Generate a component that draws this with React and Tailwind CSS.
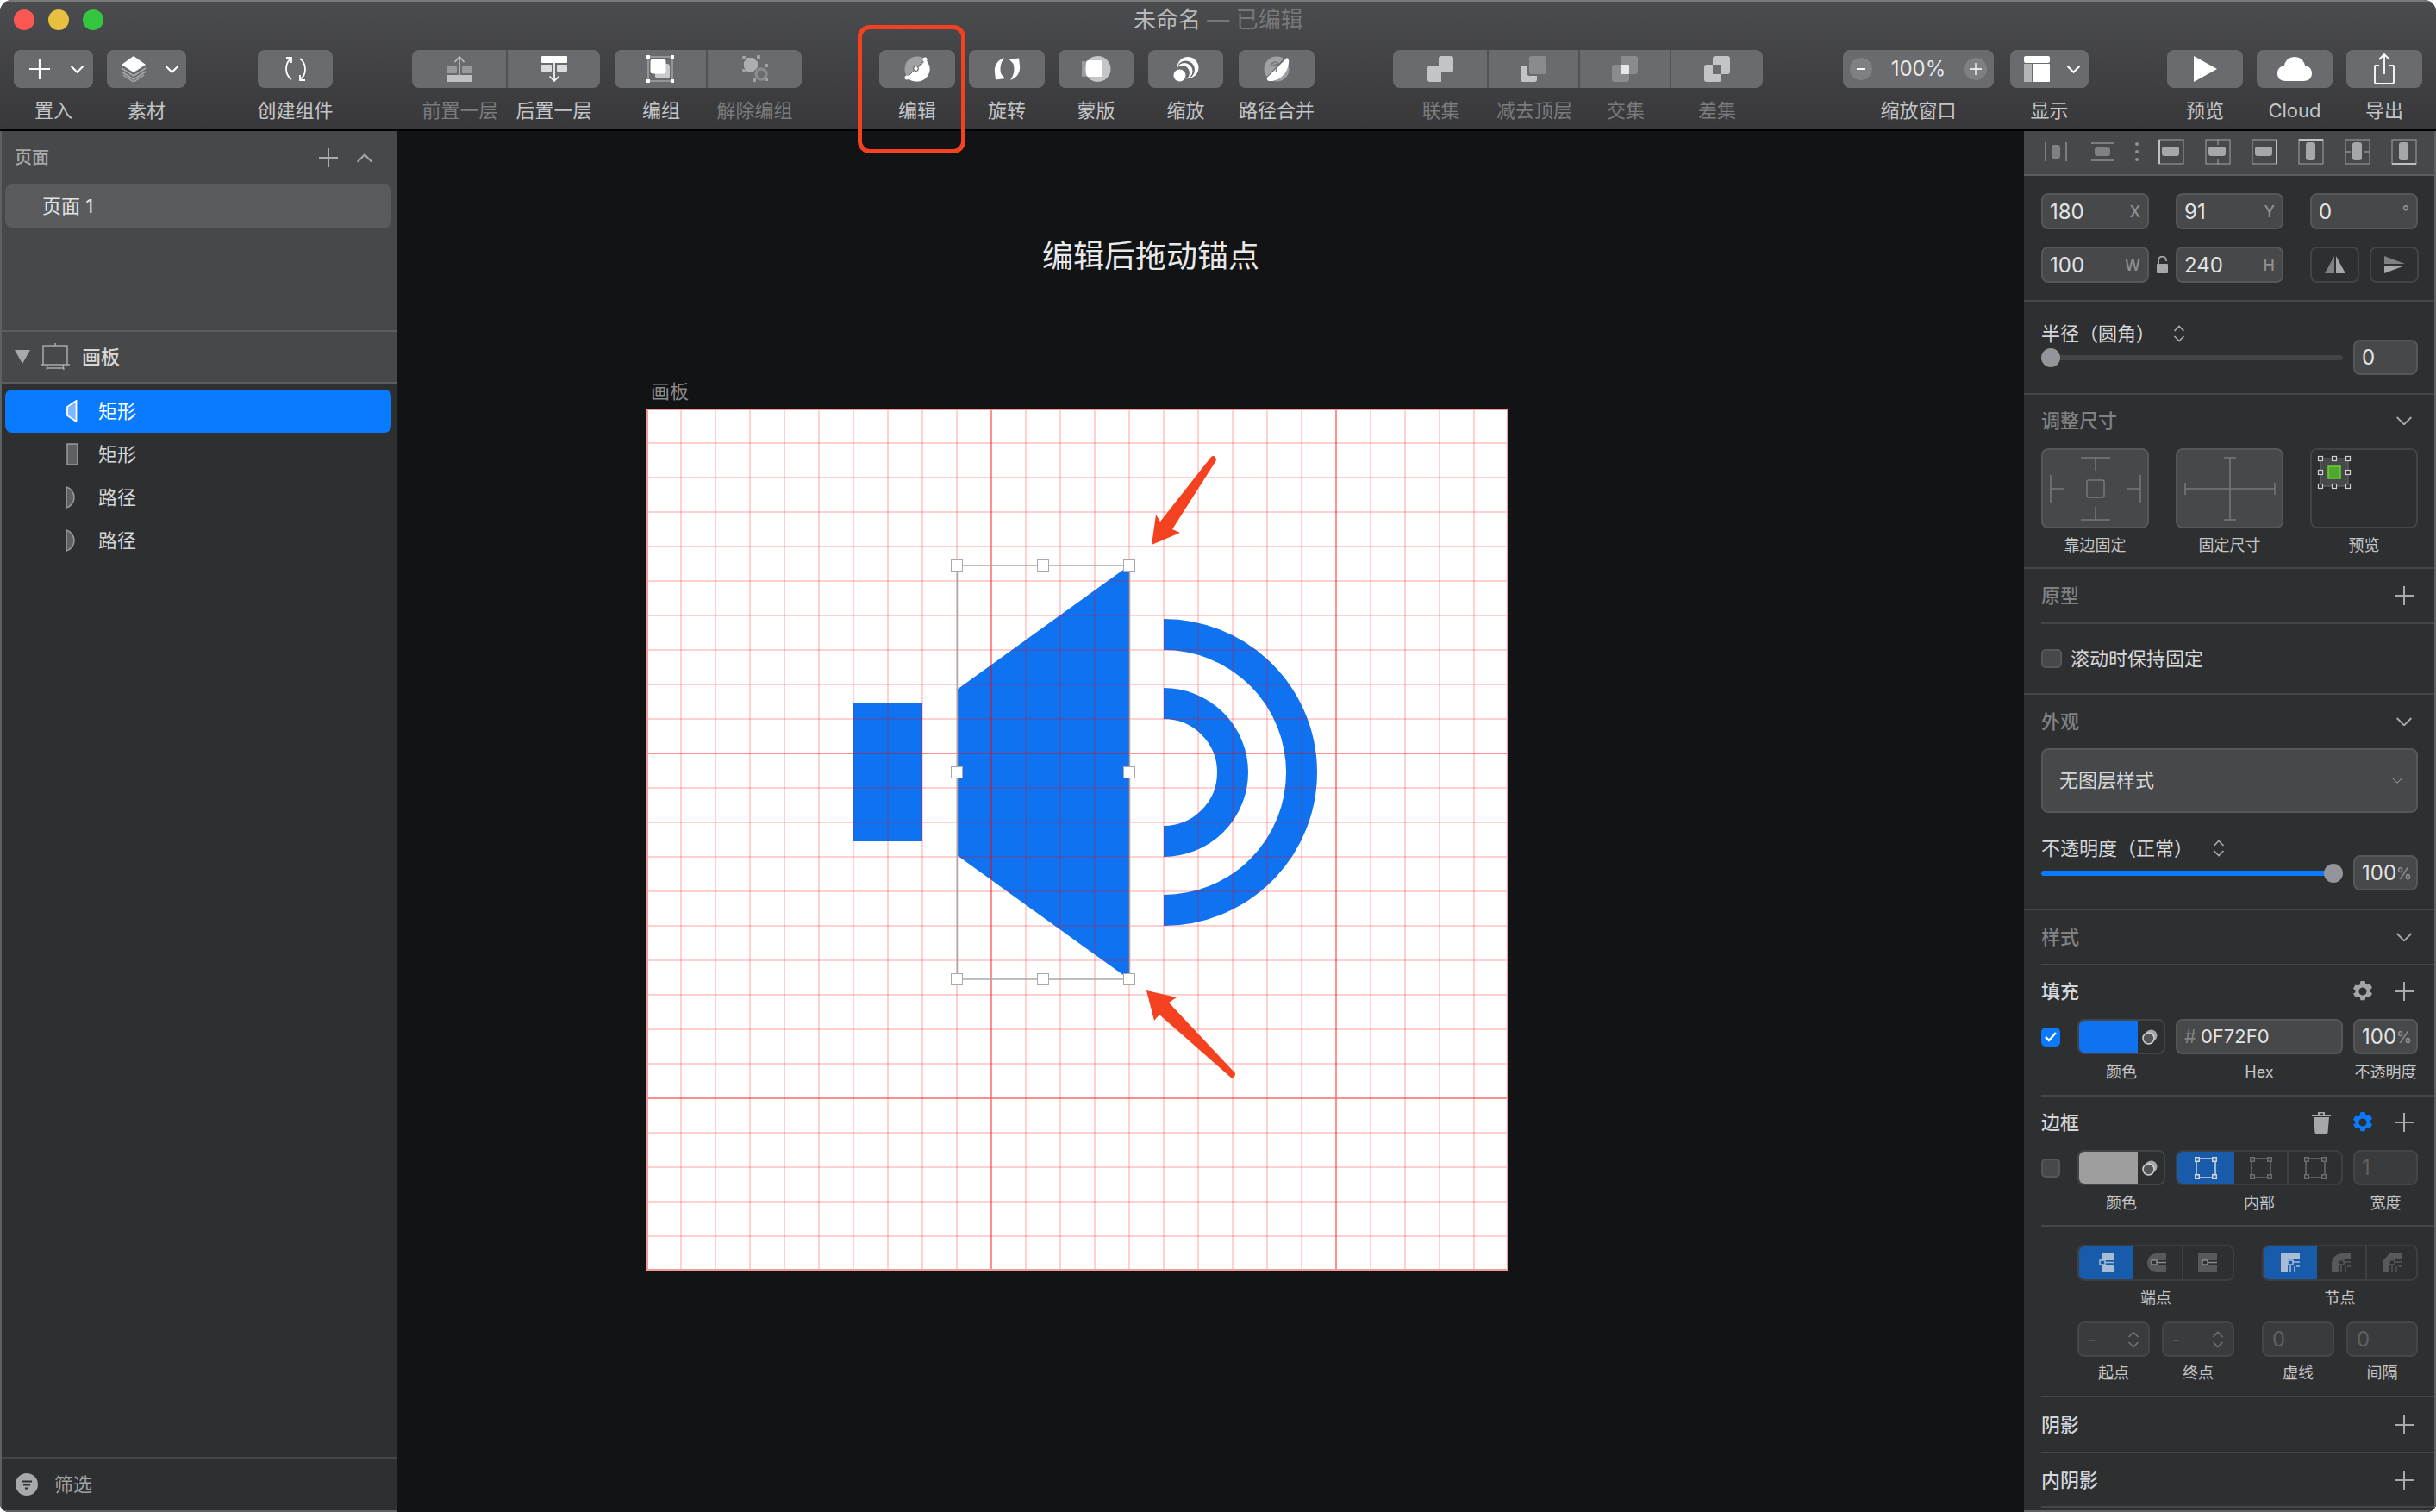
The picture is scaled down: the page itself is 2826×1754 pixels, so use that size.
import React from "react";

const Plus = ({ size = 22, color = "#a9aaac", strokeWidth = 2 }) => (
  <svg width={size} height={size} viewBox="0 0 22 22" fill="none" stroke={color} strokeWidth={strokeWidth}>
    <path d="M11 0V22M0 11H22" />
  </svg>
);

const Chevron = ({ size = 18, color = "#a9aaac", up = false, strokeWidth = 2 }) => (
  <svg width={size} height={size * 0.6} viewBox="0 0 18 11" fill="none" stroke={color} strokeWidth={strokeWidth}>
    <path d={up ? "M0.5 10L9 1.5L17.5 10" : "M0.5 1L9 9.5L17.5 1"} />
  </svg>
);

const Updown = ({ color = "#a9aaac" }) => (
  <svg width="14" height="20" viewBox="0 0 14 20" fill="none" stroke={color} strokeWidth="1.6">
    <path d="M1.5 7L7 1.5L12.5 7M1.5 13L7 18.5L12.5 13" />
  </svg>
);

const Gear = ({ color = "#a4a5a7" }) => (
  <svg width="26" height="26" viewBox="0 0 26 26">
    <path
      fill={color}
      fillRule="evenodd"
      d="M10.5 1h5l.8 3.2 2 1.1 3.2-.9 2.500 4.300-2.400 2.300v2.200l2.400 2.300-2.500 4.300-3.200-.9-2 1.100-.8 3.200h-5l-.8-3.200-2-1.100-3.200.9-2.500-4.300L4.400 14.200V12L2 9.700l2.500-4.300 3.200.9 2-1.100zM13 8.500a4.500 4.500 0 1 0 0 9 4.500 4.500 0 0 0 0-9z"
    />
  </svg>
);

const Icon = ({ children, w = 30, h = 30 }) => (
  <svg width={w} height={h} viewBox={`0 0 ${w} ${h}`} fill="none">
    {children}
  </svg>
);

const BTN = "#6a6b6e";

const icons = {
  layers: (
    <Icon>
      <path d="M15 0L29 10L15 19L1 10Z" fill="#fff" />
      <path d="M1 14L15 23L29 14M1 18L15 27L29 18M3 22L15 30L27 22" stroke="#a8a9ab" strokeWidth="1.5" />
    </Icon>
  ),
  symbol: (
    <Icon>
      <path d="M10 3C2 8 2 21 10 27M20 27C28 22 28 9 20 3" stroke="#fff" strokeWidth="1.8" />
      <path d="M4 2H10V8M26 28H20V22" stroke="#fff" strokeWidth="1.8" />
    </Icon>
  ),
  forward: (
    <Icon>
      <rect x="0" y="12" width="12" height="8" rx="1" fill="#98999b" />
      <rect x="18" y="12" width="12" height="8" rx="1" fill="#98999b" />
      <rect x="0" y="22" width="30" height="8" rx="1" fill="#bfc0c2" />
      <path d="M15 22V1M9.500 7L15 1L20.500 7" stroke="#bfc0c2" strokeWidth="1.6" />
    </Icon>
  ),
  backward: (
    <Icon>
      <rect x="0" y="0" width="30" height="8" rx="1" fill="#fff" />
      <rect x="0" y="10" width="12" height="8" rx="1" fill="#dcdde0" />
      <rect x="18" y="10" width="12" height="8" rx="1" fill="#dcdde0" />
      <path d="M15 8V29M9.500 23.500L15 29L20.500 23.500" stroke="#fff" strokeWidth="1.6" />
    </Icon>
  ),
  group: (
    <Icon w={32} h={32}>
      <rect x="2" y="2" width="28" height="28" stroke="#a0a1a3" strokeWidth="1.6" />
      <path d="M0 0h4v4H0zM28 0h4v4h-4zM0 28h4v4H0zM28 28h4v4h-4z" fill="#fff" />
      <rect x="10" y="10" width="17" height="17" rx="3" fill="#c9cacc" />
      <rect x="4.500" y="4.500" width="18" height="17" rx="3" fill="#fff" />
    </Icon>
  ),
  ungroup: (
    <Icon w={30} h={32}>
      <path d="M6 3H13L18 8V14L13 19H6L2 14V8Z" fill="#adaeb0" />
      <path d="M0 1h4v4H0zM17 0h4v4h-4zM0 16h4v4H0zM27 10h3v4h-3zM16 16h4v4h-4zM27 26h3v4h-3zM12 27h4v4h-4z" fill="#a0a1a3" />
      <circle cx="22" cy="22" r="6" stroke="#8a8b8d" strokeWidth="3.500" />
    </Icon>
  ),
  edit: (
    <Icon>
      <circle cx="15" cy="15" r="14.500" fill="#a0a1a3" />
      <path d="M24.500 4C22 9 19 12 15 14C10 16 8 21 3 25C6 28 10 29.500 15 29.500A14.500 14.500 0 0 0 24.500 4Z" fill="#fff" />
      <path d="M3 25L13.500 14.500L24 4" stroke={BTN} strokeWidth="1" />
      <circle cx="24" cy="4" r="2.500" fill="#fff" />
      <circle cx="13.500" cy="14.500" r="2.800" fill="#fff" stroke={BTN} strokeWidth="1.200" />
      <circle cx="3" cy="25" r="2.500" fill="#fff" />
    </Icon>
  ),
  rotate: (
    <Icon w={31}>
      <path d="M12 2C4 5 0 11 1 19L2 27.500L13 26L8.500 21C6.500 15 7.500 8 12 2Z" fill="#fff" />
      <path d="M12 2C4 5 0 11 1 19L2 27.500L13 26L8.500 21C6.500 15 7.500 8 12 2Z" fill="#fff" transform="rotate(180 15.500 15)" />
    </Icon>
  ),
  mask: (
    <Icon w={34}>
      <rect x="0" y="6" width="5" height="18" rx="1" fill="#9b9c9e" />
      <circle cx="18.500" cy="15" r="15" fill="#c4c5c7" />
      <rect x="5" y="5" width="19" height="19" rx="3" fill="#fff" />
    </Icon>
  ),
  scale: (
    <Icon>
      <circle cx="17" cy="13.500" r="12.500" fill="#fff" />
      <circle cx="14.500" cy="16" r="10.500" fill={BTN} />
      <circle cx="13" cy="17.500" r="9.500" fill="#fff" />
      <circle cx="10.500" cy="19.500" r="8.500" fill={BTN} />
      <circle cx="7.500" cy="22.500" r="7" fill="#fff" />
    </Icon>
  ),
  combine: (
    <Icon>
      <circle cx="15" cy="15" r="14.500" fill="#a0a1a3" />
      <path d="M26 0L30 4L29 9C27 20 18 30 6 30L1 27Z" fill={BTN} />
      <path d="M27 2Q30 4 29 8C28 20 18 30 6 29Q3 28 4 25Z" fill="#fff" />
      <path d="M7 12L17 9L14 18M17 9C14 5 10 7 7 12" stroke="#6d6e70" strokeWidth="1.200" />
    </Icon>
  ),
  union: (
    <Icon>
      <path d="M16 0H27Q30 0 30 3V16Q30 19 27 19H16V30H3Q0 30 0 27V14Q0 11 3 11H13V3Q13 0 16 0Z" fill="#c3c4c6" />
    </Icon>
  ),
  subtract: (
    <Icon>
      <rect x="10" y="0" width="20" height="21" rx="3" fill="#8a8b8d" />
      <path d="M0 14Q0 11 3 11H8V21Q8 23 10 23H19V27Q19 30 16 30H3Q0 30 0 27Z" fill="#c3c4c6" />
    </Icon>
  ),
  intersect: (
    <Icon>
      <rect x="10" y="0" width="20" height="21" rx="3" fill="#8a8b8d" />
      <rect x="0" y="10" width="20" height="20" rx="3" fill="#8a8b8d" />
      <rect x="10" y="10" width="10" height="11" rx="1" fill="#e6e7e9" />
    </Icon>
  ),
  difference: (
    <Icon>
      <rect x="10" y="0" width="20" height="21" rx="3" fill="#c3c4c6" />
      <rect x="0" y="10" width="20" height="20" rx="3" fill="#c3c4c6" />
      <rect x="10" y="10" width="10" height="11" fill="#6b6c6e" />
    </Icon>
  ),
  view: (
    <Icon>
      <rect x="0" y="0" width="30" height="8" rx="2" fill="#fff" />
      <rect x="0" y="9" width="9" height="21" fill="#b4b5b7" />
      <rect x="10" y="9" width="20" height="21" rx="1" fill="#fff" />
    </Icon>
  ),
  play: (
    <Icon>
      <path d="M2 0L29 15L2 30Z" fill="#fff" />
    </Icon>
  ),
  cloud: (
    <Icon w={40}>
      <path d="M10 29C3 29 0 25 0 20C0 15 3 12 8 11C9 5 14 1 20 1C26 1 31 5 32 11C37 12 40 15 40 20C40 25 37 29 30 29Z" fill="#fff" />
    </Icon>
  ),
  share: (
    <Icon h={36}>
      <path d="M9 14H5Q4 14 4 15V33Q4 35 6 35H24Q26 35 26 33V15Q26 14 25 14H21" stroke="#fff" strokeWidth="1.800" />
      <path d="M15 24V2M9 7L15 1L21 7" stroke="#fff" strokeWidth="1.800" />
    </Icon>
  ),
};

const Tool = ({ label, className = "", btn = "rounded-[8px]", dim = false, children }) => (
  <div className={`flex flex-col items-center shrink-0 ${className}`}>
    <div className={`w-full h-[44px] bg-[#6a6b6e] flex items-center justify-center ${btn}`}>{children}</div>
    <span className={`mt-[11px] text-[22px] leading-[30px] whitespace-nowrap ${dim ? "text-[#7a7b7d]" : "text-[#c4c5c7]"}`}>
      {label}
    </span>
  </div>
);

const Menu = ({ children, gap = "gap-[22px]" }) => (
  <div className={`flex items-center pl-[6px] ${gap}`}>
    {children}
    <Chevron color="#fff" size={15} strokeWidth={2.5} />
  </div>
);

const Toolbar = () => (
  <div className="relative h-[152px] shrink-0 bg-gradient-to-b from-[#4b4c4f] to-[#38383b] border-t-2 border-[#7a7a7c] border-b-2 border-b-black">
    <div className="flex items-center h-[42px] pl-[16px] gap-[16px]">
      <div className="w-[24px] h-[24px] rounded-full bg-[#fc5753]" />
      <div className="w-[24px] h-[24px] rounded-full bg-[#e8bf3f]" />
      <div className="w-[24px] h-[24px] rounded-full bg-[#34c63f]" />
      <div className="ml-[1179px] text-[26px] leading-[34px] text-[#b9babc] whitespace-nowrap">
        未命名 <span className="text-[#77787a]">— 已编辑</span>
      </div>
    </div>
    <div className="flex mt-[14px]">
      <Tool label="置入" className="w-[92px] ml-[16px]">
        <Menu gap="gap-[24px]"><Plus size={24} color="#fff" /></Menu>
      </Tool>
      <Tool label="素材" className="w-[92px] ml-[16px]">
        <Menu>{icons.layers}</Menu>
      </Tool>
      <Tool label="创建组件" className="w-[87px] ml-[83px]">{icons.symbol}</Tool>
      <div className="flex ml-[92px]">
        <Tool label="前置一层" dim className="w-[111px]" btn="rounded-l-[8px] border-r-2 border-[#515254]">{icons.forward}</Tool>
        <Tool label="后置一层" className="w-[107px]" btn="rounded-r-[8px]">{icons.backward}</Tool>
      </div>
      <div className="flex ml-[17px]">
        <Tool label="编组" className="w-[108px]" btn="rounded-l-[8px] border-r-2 border-[#515254]">{icons.group}</Tool>
        <Tool label="解除编组" dim className="w-[109px]" btn="rounded-r-[8px]">{icons.ungroup}</Tool>
      </div>
      <Tool label="编辑" className="w-[88px] ml-[90px]">{icons.edit}</Tool>
      <Tool label="旋转" className="w-[88px] ml-[16px]">{icons.rotate}</Tool>
      <Tool label="蒙版" className="w-[87px] ml-[16px]">{icons.mask}</Tool>
      <Tool label="缩放" className="w-[87px] ml-[17px]">{icons.scale}</Tool>
      <Tool label="路径合并" className="w-[88px] ml-[18px]">{icons.combine}</Tool>
      <div className="flex ml-[91px]">
        <Tool label="联集" dim className="w-[111px]" btn="rounded-l-[8px] border-r-2 border-[#515254]">{icons.union}</Tool>
        <Tool label="减去顶层" dim className="w-[106px]" btn="border-r-2 border-[#515254]">{icons.subtract}</Tool>
        <Tool label="交集" dim className="w-[106px]" btn="border-r-2 border-[#515254]">{icons.intersect}</Tool>
        <Tool label="差集" dim className="w-[106px]" btn="rounded-r-[8px]">{icons.difference}</Tool>
      </div>
      <Tool label="缩放窗口" className="w-[175px] ml-[93px]">
        <div className="flex items-center justify-between w-full px-[8px]">
          <div className="w-[26px] h-[26px] rounded-full bg-[#7f8082] flex items-center justify-center">
            <div className="w-[10px] h-[2px] bg-white" />
          </div>
          <span className="text-[24px] text-[#e8e8e9]">100%</span>
          <div className="w-[26px] h-[26px] rounded-full bg-[#7f8082] flex items-center justify-center">
            <Plus size={14} color="#fff" />
          </div>
        </div>
      </Tool>
      <Tool label="显示" className="w-[91px] ml-[19px]">
        <Menu gap="gap-[20px]">{icons.view}</Menu>
      </Tool>
      <Tool label="预览" className="w-[88px] ml-[91px]">{icons.play}</Tool>
      <Tool label="Cloud" className="w-[88px] ml-[16px]">{icons.cloud}</Tool>
      <Tool label="导出" className="w-[88px] ml-[16px]">{icons.share}</Tool>
    </div>
    {/* callout drawn over the toolbar */}
    <div className="absolute left-[995px] top-[27px] w-[125px] h-[149px] border-[5px] border-[#f4411f] rounded-[14px] z-10" />
  </div>
);

const LayerRow = ({ label, active = false, children }) => (
  <div className={`ml-[4px] mr-[6px] h-[50px] rounded-[8px] flex items-center ${active ? "bg-[#0a7aff] text-white" : "text-[#d5d6d8]"}`}>
    <div className="w-[37px] ml-[71px] flex items-center shrink-0">{children}</div>
    <span className="text-[22px] leading-[30px]">{label}</span>
  </div>
);

const HalfMoon = () => (
  <svg width="14" height="26" viewBox="0 0 14 26">
    <path d="M0 1A12.500 12.500 0 0 1 0 25Z" fill="#5f6062" stroke="#9a9b9d" strokeWidth="1.500" />
  </svg>
);

const Sidebar = () => (
  <aside className="w-[460px] shrink-0 flex flex-col bg-[#2e2f31] border-l-2 border-b-2 border-[#5f6062]">
    <div className="h-[233px] shrink-0 bg-[#47484a] border-b-2 border-[#5c5d5f]">
      <div className="h-[62px] flex items-center pl-[15px] pr-[28px]">
        <span className="text-[20px] font-medium text-[#a8a9ab]">页面</span>
        <div className="ml-auto mr-[22px]"><Plus /></div>
        <Chevron up />
      </div>
      <div className="ml-[4px] mr-[6px] h-[50px] rounded-[8px] bg-[#5a5b5d] flex items-center pl-[43px] text-[22px] text-[#e2e3e4]">
        页面 1
      </div>
    </div>
    <div className="h-[60px] shrink-0 bg-[#47484a] border-b-2 border-[#5c5d5f] flex items-center pl-[15px]">
      <svg width="18" height="16" viewBox="0 0 18 16"><path d="M0 0H18L9 16Z" fill="#a8a9ab" /></svg>
      <svg className="ml-[12px]" width="34" height="32" viewBox="0 0 34 32" fill="none" stroke="#a8a9ab" strokeWidth="1.500">
        <path d="M17 0V3M3 3H31V25H3ZM0 25H34M8 25L7 31M26 25L27 31M7 29H27" />
      </svg>
      <span className="ml-[14px] text-[22px] font-medium text-[#d5d6d8]">画板</span>
    </div>
    <div className="pt-[7px] flex-1">
      <LayerRow label="矩形" active>
        <svg width="13" height="26" viewBox="0 0 13 26">
          <path d="M11.500 1V25L1 18V8Z" fill="#7db8ff" stroke="#fff" strokeWidth="1.800" />
        </svg>
      </LayerRow>
      <LayerRow label="矩形">
        <svg width="14" height="26" viewBox="0 0 14 26">
          <rect x="1" y="1" width="12" height="24" fill="#5f6062" stroke="#9a9b9d" strokeWidth="1.500" />
        </svg>
      </LayerRow>
      <LayerRow label="路径"><HalfMoon /></LayerRow>
      <LayerRow label="路径"><HalfMoon /></LayerRow>
    </div>
    <div className="h-[62px] shrink-0 border-t-2 border-[#454648] flex items-center pl-[16px]">
      <svg width="26" height="26" viewBox="0 0 26 26">
        <circle cx="13" cy="13" r="13" fill="#a8a9ab" />
        <path d="M7 9.500H19M9 13.500H17M11 17.500H15" stroke="#2e2f31" strokeWidth="2" />
      </svg>
      <span className="ml-[19px] text-[22px] text-[#a0a1a3]">筛选</span>
    </div>
  </aside>
);

const Handle = ({ x, y }) => (
  <rect x={x - 6.5} y={y - 6.5} width="13" height="13" fill="#fff" stroke="#a9a9a9" strokeWidth="1" />
);

const gridV = Array.from({ length: 24 }, (_, i) => 750 + 40 * (i + 1));
const gridH = Array.from({ length: 24 }, (_, i) => 474 + 40 * (i + 1));

const Artboard = () => (
  <svg className="block" width="1000" height="1000" viewBox="750 474 1000 1000">
    <rect x="750" y="474" width="1000" height="1000" fill="#fff" />
    <path fill="#0f72f0" d="M990 816H1070V976H990ZM1110 800L1310 656V1136L1110 992Z" />
    <path
      fill="none"
      stroke="#0f72f0"
      strokeWidth="36"
      d="M1350 736A160 160 0 0 1 1350 1056M1350 816A80 80 0 0 1 1350 976"
    />
    {gridV.map((x) => (
      <line key={x} x1={x} x2={x} y1="474" y2="1474" stroke="#ff0000" strokeOpacity="0.18" strokeWidth="2" />
    ))}
    {gridH.map((y) => (
      <line key={y} y1={y} y2={y} x1="750" x2="1750" stroke="#ff0000" strokeOpacity="0.18" strokeWidth="2" />
    ))}
    <path d="M1150 474V1474M1550 474V1474M750 874H1750M750 1274H1750" stroke="#ff0000" strokeOpacity="0.32" strokeWidth="2" />
    <rect x="751" y="475" width="998" height="998" fill="none" stroke="#f49a9a" strokeWidth="2" />
    <path d="M1110.500 656H1310.500V1136H1110.500Z" fill="none" stroke="#a9a9a9" strokeWidth="1.500" />
    <Handle x={1110} y={656} />
    <Handle x={1210} y={656} />
    <Handle x={1310} y={656} />
    <Handle x={1110} y={896} />
    <Handle x={1310} y={896} />
    <Handle x={1110} y={1136} />
    <Handle x={1210} y={1136} />
    <Handle x={1310} y={1136} />
    <path d="M1336 632L1341 597L1346 605L1405 530Q1410 527 1411 534L1360 614L1369 618Z" fill="#f4411f" />
    <path d="M1330 1149L1365 1157L1356 1163L1433 1245Q1433 1251 1428 1250L1345 1177L1339 1184Z" fill="#f4411f" />
  </svg>
);

const Canvas = () => (
  <main className="w-[1888px] shrink-0 bg-[#121315] flex flex-col pt-[121px]">
    <div className="ml-[749px] h-[48px] text-[36px] leading-[48px] text-[#e8e8e8] whitespace-nowrap">编辑后拖动锚点</div>
    <div className="ml-[295px] mt-[118px] h-[30px] text-[22px] leading-[30px] text-[#8a8b8d]">画板</div>
    <div className="ml-[290px] mt-[5px]"><Artboard /></div>
  </main>
);

const Field = ({ value, suffix, className = "", h = "h-[42px]" }) => (
  <div className={`${h} shrink-0 rounded-[8px] border-2 border-[#565759] bg-[#47484a] flex items-center px-[8px] pt-[1px] ${className}`}>
    <span className="text-[24px] text-[#e2e3e4]">{value}</span>
    {suffix && <span className="ml-auto text-[18px] font-medium text-[#8f9092]">{suffix}</span>}
  </div>
);

const Title = ({ children, light = false }) => (
  <span className={`text-[22px] leading-[30px] font-medium ${light ? "text-[#d5d6d8]" : "text-[#808183]"}`}>{children}</span>
);

const Caption = ({ children, className = "" }) => (
  <div className={`text-[18px] leading-[24px] text-center text-[#c4c5c7] whitespace-nowrap ${className}`}>{children}</div>
);

const Head = ({ children }) => <div className="w-[22px] flex justify-center">{children}</div>;

const AlignIcon = ({ kind }) => {
  const stroke = "#8f9092";
  const fill = "#a6a7a9";
  return (
    <svg width="30" height="30" viewBox="0 0 30 30" fill="none">
      <rect x="1" y="1" width="28" height="28" stroke={stroke} strokeWidth="1.300" />
      {kind < 3 ? (
        <rect x="4" y="9" width="20" height="11" rx="3" fill={fill} />
      ) : (
        <rect x="9" y="4" width="11" height="21" rx="3" fill={fill} />
      )}
      {kind === 1 && <path d="M15 0V7M15 23V30" stroke={stroke} strokeWidth="1.300" />}
      {kind === 4 && <path d="M0 15H7M23 15H30" stroke={stroke} strokeWidth="1.300" />}
      {kind === 0 && <path d="M1 1V29" stroke="#c0c1c3" strokeWidth="2" />}
      {kind === 2 && <path d="M29 1V29" stroke="#c0c1c3" strokeWidth="2" />}
      {kind === 3 && <path d="M1 1H29" stroke="#c0c1c3" strokeWidth="2" />}
      {kind === 5 && <path d="M1 29H29" stroke="#c0c1c3" strokeWidth="2" />}
    </svg>
  );
};

const Slider = ({ value, fill = false }) => (
  <div className="relative w-[350px] h-[6px] rounded-full bg-[#434446]">
    {fill && <div className="h-full rounded-full bg-[#0a7aff]" style={{ width: `${value}%` }} />}
    <div className={`absolute top-[-8px] w-[22px] h-[22px] rounded-full bg-[#94959a] ${fill ? "right-0" : "left-0"}`} />
  </div>
);

const CornerIcon = ({ variant }) => {
  const c = variant === 0 ? "#d4d5d7" : "#6c6d6f";
  return (
    <svg width="26" height="26" viewBox="0 0 26 26" fill="none">
      <rect x="2" y="2" width="22" height="22" stroke={c} strokeWidth="1.500" />
      {[[0, 0], [20, 0], [0, 20], [20, 20]].map(([x, y]) => (
        <rect key={`${x}-${y}`} x={x + 0.75} y={y + 0.75} width="4.500" height="4.500" fill={variant === 0 ? "#185bab" : "#2e2f31"} stroke={c} strokeWidth="1.500" />
      ))}
    </svg>
  );
};

const LineEndIcon = ({ active, shape }) => {
  const c = active ? "#a9bcd6" : "#58595b";
  const d = {
    butt: "M8 0H22V8H10V14H22V22H8Z",
    round: "M11 0H22V8H11V14H22V22H11A11 11 0 0 1 11 0Z",
    square: "M0 0H22V8H10V14H22V22H0Z",
  };
  return (
    <svg width="24" height="22" viewBox="0 0 24 22">
      <path d={d[shape]} fill={c} />
      <rect x="5" y="8" width="6" height="5" fill={active ? "#185bab" : "#2e2f31"} stroke={active ? "#a9bcd6" : "#8a8b8d"} strokeWidth="1.500" />
      <path d="M11 10.500H22" stroke={active ? "#a9bcd6" : "#8a8b8d"} strokeWidth="1.500" />
    </svg>
  );
};

const JoinIcon = ({ active, shape }) => {
  const c = active ? "#a9bcd6" : "#58595b";
  const d = {
    miter: "M0 0H22V7H8V22H0Z",
    round: "M12 0H22V7H12Q8 7 8 12V22H0V12A12 12 0 0 1 12 0Z",
    bevel: "M8 0H22V7H10L8 9V22H0V9Z",
  };
  return (
    <svg width="22" height="22" viewBox="0 0 22 22" fill="none">
      <path d={d[shape]} fill={c} />
      <rect x="8" y="8" width="6" height="5" stroke={c} strokeWidth="1.500" />
      <path d="M11 13V22M14 10H22M16 15V22M18 15H22" stroke={c} strokeWidth="1.500" />
    </svg>
  );
};

const Segment = ({ active = false, children, className = "" }) => (
  <div className={`h-full flex items-center justify-center ${active ? "bg-[#185bab]" : ""} ${className}`}>{children}</div>
);

const Stepper = ({ className = "" }) => (
  <div className={`h-[41px] rounded-[8px] border-2 border-[#454648] bg-[#3a3b3d] flex items-center justify-between px-[10px] ${className}`}>
    <span className="text-[20px] text-[#606163]">-</span>
    <Updown color="#707173" />
  </div>
);

const Swatch = ({ color }) => (
  <div className="ml-[20px] w-[102px] h-[41px] rounded-[8px] border-2 border-[#434446] flex overflow-hidden">
    <div className={`w-[70px] -m-[2px] ${color}`} />
    <div className="flex-1 flex items-center justify-center">
      <svg width="18" height="18" viewBox="0 0 18 18">
        <circle cx="10.500" cy="7.500" r="7" fill="#a6a7a9" />
        <circle cx="7.500" cy="10.500" r="6.500" fill="#55565a" stroke="#d0d1d3" strokeWidth="1.500" />
      </svg>
    </div>
  </div>
);

const Inspector = () => (
  <aside className="flex-1 min-w-0 flex flex-col bg-[#2e2f31] border-r-2 border-b-2 border-[#5f6062]">
    <div className="h-[52px] shrink-0 bg-[#47484a] border-b-2 border-[#5c5d5f] flex items-center pl-[24px] pb-[2px]">
      <svg width="26" height="22" viewBox="0 0 26 22" fill="none">
        <path d="M1 0V22M25 0V22" stroke="#8f9092" strokeWidth="1.500" />
        <rect x="8" y="3" width="10" height="16" rx="3" fill="#808183" />
      </svg>
      <svg className="ml-[28px]" width="26" height="22" viewBox="0 0 26 22" fill="none">
        <path d="M0 1H26M0 21H26" stroke="#8f9092" strokeWidth="1.500" />
        <rect x="4" y="6" width="18" height="10" rx="3" fill="#808183" />
      </svg>
      <div className="ml-[25px] w-[4px] flex flex-col gap-[5px]">
        <div className="w-[4px] h-[4px] rounded-full bg-[#8f9092]" />
        <div className="w-[4px] h-[4px] rounded-full bg-[#8f9092]" />
        <div className="w-[4px] h-[4px] rounded-full bg-[#8f9092]" />
      </div>
      <div className="ml-[23px] flex gap-[24px]">
        {[0, 1, 2, 3, 4, 5].map((k) => <AlignIcon key={k} kind={k} />)}
      </div>
    </div>

    <div className="h-[146px] shrink-0 border-b-2 border-[#454648] pt-[20px] pl-[20px]">
      <div className="flex gap-[31px]">
        <Field value="180" suffix="X" className="w-[125px]" />
        <Field value="91" suffix="Y" className="w-[125px]" />
        <Field value="0" suffix="°" className="w-[125px]" />
      </div>
      <div className="flex mt-[20px]">
        <Field value="100" suffix="W" className="w-[125px]" />
        <div className="w-[31px] flex items-center justify-center">
          <svg width="15" height="20" viewBox="0 0 15 20">
            <path d="M3 9V5A4.500 4.500 0 0 1 12 5V6" fill="none" stroke="#a6a7a9" strokeWidth="1.800" />
            <rect x="1" y="9" width="13" height="11" rx="1" fill="#a6a7a9" />
          </svg>
        </div>
        <Field value="240" suffix="H" className="w-[125px]" />
        <div className="ml-[31px] w-[57px] h-[42px] rounded-[8px] border-2 border-[#434446] flex items-center justify-center">
          <svg width="24" height="20" viewBox="0 0 24 20">
            <path d="M11 0V20H0Z" fill="#808183" />
            <path d="M13 0V20H24Z" fill="#a6a7a9" />
          </svg>
        </div>
        <div className="ml-[12px] w-[57px] h-[42px] rounded-[8px] border-2 border-[#434446] flex items-center justify-center">
          <svg width="24" height="20" viewBox="0 0 24 20">
            <path d="M0 0L24 9H0Z" fill="#808183" />
            <path d="M0 11H24L0 20Z" fill="#a6a7a9" />
          </svg>
        </div>
      </div>
    </div>

    <div className="h-[108px] shrink-0 border-b-2 border-[#454648] pt-[22px] pl-[20px]">
      <div className="flex items-center h-[30px]">
        <span className="text-[22px] text-[#d5d6d8]">半径（圆角）</span>
        <div className="ml-[21px]"><Updown /></div>
      </div>
      <div className="flex items-center mt-[-8px]">
        <Slider value={0} />
        <Field value="0" className="w-[75px] ml-[12px]" h="h-[41px]" />
      </div>
    </div>

    <div className="h-[202px] shrink-0 border-b-2 border-[#454648] pt-[15px] pl-[20px] pr-[19px]">
      <div className="flex items-center justify-between pr-[5px]">
        <Title>调整尺寸</Title>
        <Head><Chevron /></Head>
      </div>
      <div className="flex gap-[31px] mt-[17px]">
        <div className="w-[125px] h-[93px] rounded-[8px] border-2 border-[#565759] bg-[#47484a] flex items-center justify-center">
          <svg width="106" height="74" viewBox="0 0 106 74" fill="none" stroke="#77787a" strokeWidth="1.500">
            <path d="M36 1H70M53 1V16M36 73H70M53 58V73M1 21V53M1 37H16M105 21V53M90 37H105" />
            <rect x="43" y="27" width="20" height="20" rx="2" />
          </svg>
        </div>
        <div className="w-[125px] h-[93px] rounded-[8px] border-2 border-[#565759] bg-[#47484a] flex items-center justify-center">
          <svg width="106" height="74" viewBox="0 0 106 74" fill="none" stroke="#77787a" strokeWidth="1.500">
            <path d="M46 1H60M53 1V73M46 73H60M1 30V44M1 37H105M105 30V44" />
          </svg>
        </div>
        <div className="relative w-[125px] h-[93px] rounded-[8px] border-2 border-[#434446]">
          <svg className="absolute left-[6px] top-[6px]" width="40" height="40" viewBox="0 0 40 40">
            <rect x="4" y="4" width="32" height="32" fill="#47484a" stroke="#6c6d6f" strokeWidth="1" />
            <rect x="13" y="13" width="14" height="14" fill="#4fa72e" stroke="#6ad13a" strokeWidth="1.500" />
            {[[4, 4], [20, 4], [36, 4], [4, 20], [36, 20], [4, 36], [20, 36], [36, 36]].map(([x, y]) => (
              <rect key={`${x}-${y}`} x={x - 2.5} y={y - 2.5} width="5" height="5" fill="#2e2f31" stroke="#d0d1d3" strokeWidth="1.200" />
            ))}
          </svg>
        </div>
      </div>
      <div className="flex gap-[31px] mt-[8px]">
        <Caption className="w-[125px]">靠边固定</Caption>
        <Caption className="w-[125px]">固定尺寸</Caption>
        <Caption className="w-[125px]">预览</Caption>
      </div>
    </div>

    <div className="h-[64px] shrink-0 ml-[20px] pr-[24px] border-b-2 border-[#454648] flex items-center justify-between">
      <Title>原型</Title>
      <Plus />
    </div>

    <div className="h-[82px] shrink-0 border-b-2 border-[#454648] pl-[20px] flex items-center">
      <div className="w-[24px] h-[22px] rounded-[5px] border-2 border-[#565759] bg-[#47484a]" />
      <span className="ml-[10px] text-[22px] text-[#d5d6d8]">滚动时保持固定</span>
    </div>

    <div className="h-[250px] shrink-0 border-b-2 border-[#454648] pt-[16px] pl-[20px] pr-[19px]">
      <div className="flex items-center justify-between pr-[5px]">
        <Title>外观</Title>
        <Head><Chevron /></Head>
      </div>
      <div className="mt-[16px] h-[75px] rounded-[8px] border-2 border-[#565759] bg-[#47484a] flex items-center justify-between pl-[19px] pr-[16px]">
        <span className="text-[22px] text-[#d5d6d8]">无图层样式</span>
        <Chevron size={12} strokeWidth={1.5} />
      </div>
      <div className="flex items-center h-[30px] mt-[26px]">
        <span className="text-[22px] text-[#d5d6d8]">不透明度（正常）</span>
        <div className="ml-[23px]"><Updown /></div>
      </div>
      <div className="flex items-center mt-[-7px]">
        <Slider value={100} fill />
        <Field value="100" suffix="%" className="w-[75px] ml-[12px]" h="h-[41px]" />
      </div>
    </div>

    <div className="h-[64px] shrink-0 ml-[20px] pr-[24px] border-b-2 border-[#454648] flex items-center justify-between">
      <Title>样式</Title>
      <Head><Chevron /></Head>
    </div>

    <div className="h-[152px] shrink-0 ml-[20px] pr-[19px] pt-[15px] border-b-2 border-[#454648]">
      <div className="flex items-center justify-between pr-[5px]">
        <Title light>填充</Title>
        <div className="flex items-center gap-[24px]">
          <Gear />
          <Plus />
        </div>
      </div>
      <div className="flex items-center mt-[17px]">
        <div className="w-[22px] h-[22px] rounded-[5px] bg-[#0a7aff] flex items-center justify-center">
          <svg width="14" height="12" viewBox="0 0 14 12" fill="none" stroke="#fff" strokeWidth="2.500"><path d="M1 6L5 10L13 1" /></svg>
        </div>
        <Swatch color="bg-[#0f72f0]" />
        <div className="ml-[12px] w-[194px] h-[41px] rounded-[8px] border-2 border-[#565759] bg-[#47484a] flex items-center px-[8px]">
          <span className="text-[22px] text-[#808183]">#</span>
          <span className="ml-[5px] text-[22px] text-[#e2e3e4]">0F72F0</span>
        </div>
        <Field value="100" suffix="%" className="w-[75px] ml-[12px]" h="h-[41px]" />
      </div>
      <div className="flex mt-[9px]">
        <Caption className="ml-[42px] w-[102px]">颜色</Caption>
        <Caption className="ml-[12px] w-[194px]">Hex</Caption>
        <Caption className="ml-[12px] w-[75px]">不透明度</Caption>
      </div>
    </div>

    <div className="h-[151px] shrink-0 ml-[20px] pr-[19px] pt-[15px] border-b-2 border-[#454648]">
      <div className="flex items-center pr-[5px]">
        <Title light>边框</Title>
        <div className="ml-auto flex items-center gap-[24px]">
          <svg width="22" height="26" viewBox="0 0 22 26" fill="#a6a7a9">
            <path d="M0 4H22V6H0ZM7 4V1H15V4H13V2.500H9V4ZM2 7H20L18.500 25Q18 26 17 26H5Q4 26 3.500 25Z" />
          </svg>
          <Gear color="#0a7aff" />
          <Plus />
        </div>
      </div>
      <div className="flex items-center mt-[17px]">
        <div className="w-[22px] h-[22px] rounded-[5px] border-2 border-[#565759] bg-[#47484a]" />
        <Swatch color="bg-[#9e9e9f]" />
        <div className="ml-[12px] w-[194px] h-[41px] rounded-[8px] border-2 border-[#3e3f41] flex overflow-hidden">
          <Segment active className="w-[66px]"><CornerIcon variant={0} /></Segment>
          <Segment className="w-[63px] border-r-2 border-[#3e3f41]"><CornerIcon variant={1} /></Segment>
          <Segment className="flex-1"><CornerIcon variant={2} /></Segment>
        </div>
        <div className="ml-[12px] w-[75px] h-[41px] rounded-[8px] border-2 border-[#454648] bg-[#3a3b3d] flex items-center px-[8px] text-[24px] text-[#5f6062]">1</div>
      </div>
      <div className="flex mt-[9px]">
        <Caption className="ml-[42px] w-[102px]">颜色</Caption>
        <Caption className="ml-[12px] w-[194px]">内部</Caption>
        <Caption className="ml-[12px] w-[75px]">宽度</Caption>
      </div>
    </div>

    <div className="h-[198px] shrink-0 ml-[20px] pr-[19px] pt-[21px] border-b-2 border-[#454648]">
      <div className="flex ml-[42px]">
        <div className="w-[182px] h-[42px] rounded-[8px] border-2 border-[#3e3f41] flex overflow-hidden">
          <Segment active className="w-[62px]"><LineEndIcon active shape="butt" /></Segment>
          <Segment className="w-[59px] border-r-2 border-[#3e3f41]"><LineEndIcon shape="round" /></Segment>
          <Segment className="flex-1"><LineEndIcon shape="square" /></Segment>
        </div>
        <div className="ml-[32px] w-[181px] h-[42px] rounded-[8px] border-2 border-[#3e3f41] flex overflow-hidden">
          <Segment active className="w-[62px]"><JoinIcon active shape="miter" /></Segment>
          <Segment className="w-[58px] border-r-2 border-[#3e3f41]"><JoinIcon shape="round" /></Segment>
          <Segment className="flex-1"><JoinIcon shape="bevel" /></Segment>
        </div>
      </div>
      <div className="flex ml-[42px] mt-[8px]">
        <Caption className="w-[182px]">端点</Caption>
        <Caption className="ml-[32px] w-[181px]">节点</Caption>
      </div>
      <div className="flex ml-[42px] mt-[15px]">
        <Stepper className="w-[84px]" />
        <Stepper className="ml-[14px] w-[84px]" />
        <div className="ml-[32px] w-[84px] h-[41px] rounded-[8px] border-2 border-[#454648] bg-[#3a3b3d] flex items-center px-[10px] text-[24px] text-[#5f6062]">0</div>
        <div className="ml-[14px] w-[83px] h-[41px] rounded-[8px] border-2 border-[#454648] bg-[#3a3b3d] flex items-center px-[10px] text-[24px] text-[#5f6062]">0</div>
      </div>
      <div className="flex ml-[42px] mt-[7px]">
        <Caption className="w-[84px]">起点</Caption>
        <Caption className="ml-[14px] w-[84px]">终点</Caption>
        <Caption className="ml-[32px] w-[84px]">虚线</Caption>
        <Caption className="ml-[14px] w-[83px]">间隔</Caption>
      </div>
    </div>

    <div className="h-[65px] shrink-0 ml-[20px] pr-[24px] border-b-2 border-[#454648] flex items-center justify-between">
      <Title light>阴影</Title>
      <Plus />
    </div>
    <div className="h-[63px] shrink-0 ml-[20px] pr-[24px] border-b-2 border-[#454648] flex items-center justify-between">
      <Title light>内阴影</Title>
      <Plus />
    </div>
  </aside>
);

export default function App() {
  return (
    <div className="w-[2826px] h-[1754px] overflow-hidden flex flex-col rounded-t-[14px] rounded-b-[10px] bg-[#2e2f31] font-['Inter','Noto_Sans_CJK_SC',sans-serif]">
      <Toolbar />
      <div className="flex flex-1 min-h-0">
        <Sidebar />
        <Canvas />
        <Inspector />
      </div>
    </div>
  );
}
